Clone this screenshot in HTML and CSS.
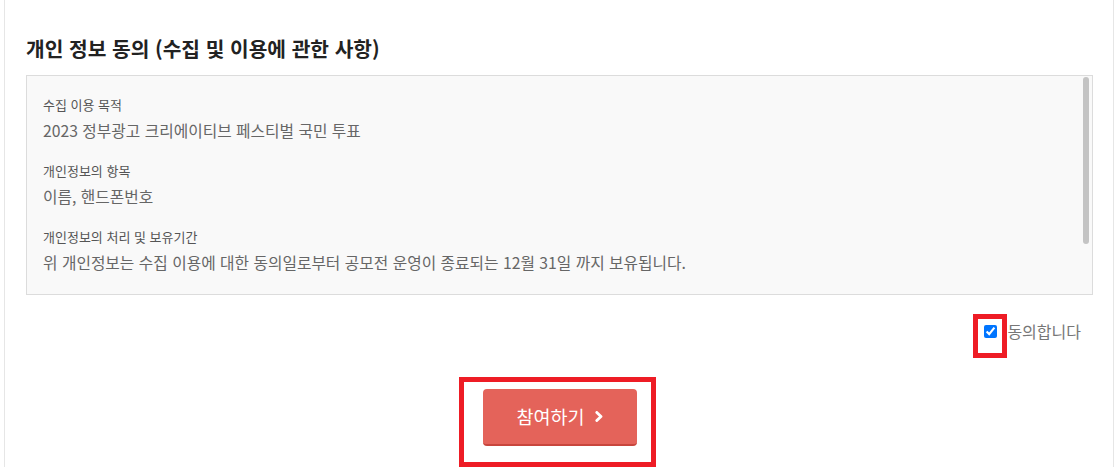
FILE: index.html
```html
<!DOCTYPE html>
<html lang="ko">
<head>
<meta charset="utf-8">
<link rel="stylesheet" href="styles.css">
</head>
<body>
<div class="wrap">
  <h2 class="title">개인 정보 동의 (수집 및 이용에 관한 사항)</h2>
  <div class="terms">
    <div class="group">
      <div class="label">수집 이용 목적</div>
      <div class="value">2023 정부광고 크리에이티브 페스티벌 국민 투표</div>
    </div>
    <div class="group">
      <div class="label">개인정보의 항목</div>
      <div class="value">이름, 핸드폰번호</div>
    </div>
    <div class="group">
      <div class="label">개인정보의 처리 및 보유기간</div>
      <div class="value">위 개인정보는 수집 이용에 대한 동의일로부터 공모전 운영이 종료되는 12월 31일 까지 보유됩니다.</div>
    </div>
    <span class="thumb"></span>
  </div>
  <div class="agree">
    <label class="agree-label">
      <span class="check-wrap">
        <input type="checkbox" class="check" checked>
        <span class="mark mark-check"></span>
      </span>
      <span class="agree-text">동의합니다</span>
    </label>
  </div>
  <div class="actions">
    <span class="btn-wrap">
      <button class="btn" type="button">참여하기
        <svg class="chev" width="8" height="11" viewBox="0 0 8 11"><path d="M1.8 1.4 L6 5.5 L1.8 9.6" fill="none" stroke="#fff" stroke-width="2.8" stroke-linecap="round" stroke-linejoin="round"/></svg>
      </button>
      <span class="mark mark-btn"></span>
    </span>
  </div>
</div>
</body>
</html>
```
FILE: styles.css
```css
html, body {
  margin: 0;
  padding: 0;
  background: #fff;
}
body {
  font-family: "Noto Sans CJK KR", "Noto Sans", sans-serif;
  overflow: hidden;
}
.wrap {
  margin-left: 4px;
  width: 1110px;
  height: 467px;
  border-left: 1px solid #e6e6e6;
  border-right: 1px solid #e6e6e6;
  padding: 33px 20px 0 21px;
  box-sizing: border-box;
}
.title {
  margin: 0 0 12px;
  font-size: 20.3px;
  line-height: 30px;
  font-weight: 700;
  color: #222;
}
.terms {
  position: relative;
  height: 220px;
  box-sizing: border-box;
  border: 1px solid #dcdcdc;
  background: #f9f9f9;
  padding: 18px 16px 0 16px;
  overflow: hidden;
}
.thumb {
  position: absolute;
  right: 3px;
  top: 1px;
  width: 6px;
  height: 167px;
  border-radius: 3px;
  background: #c4c4c4;
}
.group + .group {
  margin-top: 14px;
}
.label {
  font-size: 13px;
  line-height: 22px;
  color: #555;
}
.value {
  font-size: 15.75px;
  line-height: 30px;
  color: #666;
}
.agree {
  display: flex;
  justify-content: flex-end;
  padding-right: 12px;
  margin-top: 24px;
}
.agree-label {
  display: flex;
  align-items: center;
  height: 24px;
}
.check-wrap {
  position: relative;
  display: inline-flex;
}
.check {
  width: 13px;
  height: 13px;
  margin: 0 10px 0 0;
}
.agree-text {
  font-size: 16px;
  color: #777;
}
.actions {
  display: flex;
  justify-content: center;
  margin-top: 46px;
}
.btn-wrap {
  position: relative;
  display: inline-flex;
}
.btn {
  width: 154px;
  height: 57px;
  box-sizing: border-box;
  border: 0;
  border-bottom: 2px solid #c8463d;
  border-radius: 4px;
  background: #e4635a;
  color: #fff;
  font-family: "Noto Sans CJK KR", "Noto Sans", sans-serif;
  font-size: 18.5px;
  display: flex;
  align-items: center;
  justify-content: center;
  gap: 10px;
  padding: 0 0 2px;
  cursor: pointer;
}
.chev {
  display: block;
  margin-top: 2px;
}
.mark {
  position: absolute;
  border: 5px solid #ee1c25;
  box-sizing: border-box;
  pointer-events: none;
}
.mark-check {
  left: -11px;
  top: -11px;
  width: 34px;
  height: 44px;
}
.mark-btn {
  left: -24px;
  top: -12px;
  width: 197px;
  height: 90px;
}
```
